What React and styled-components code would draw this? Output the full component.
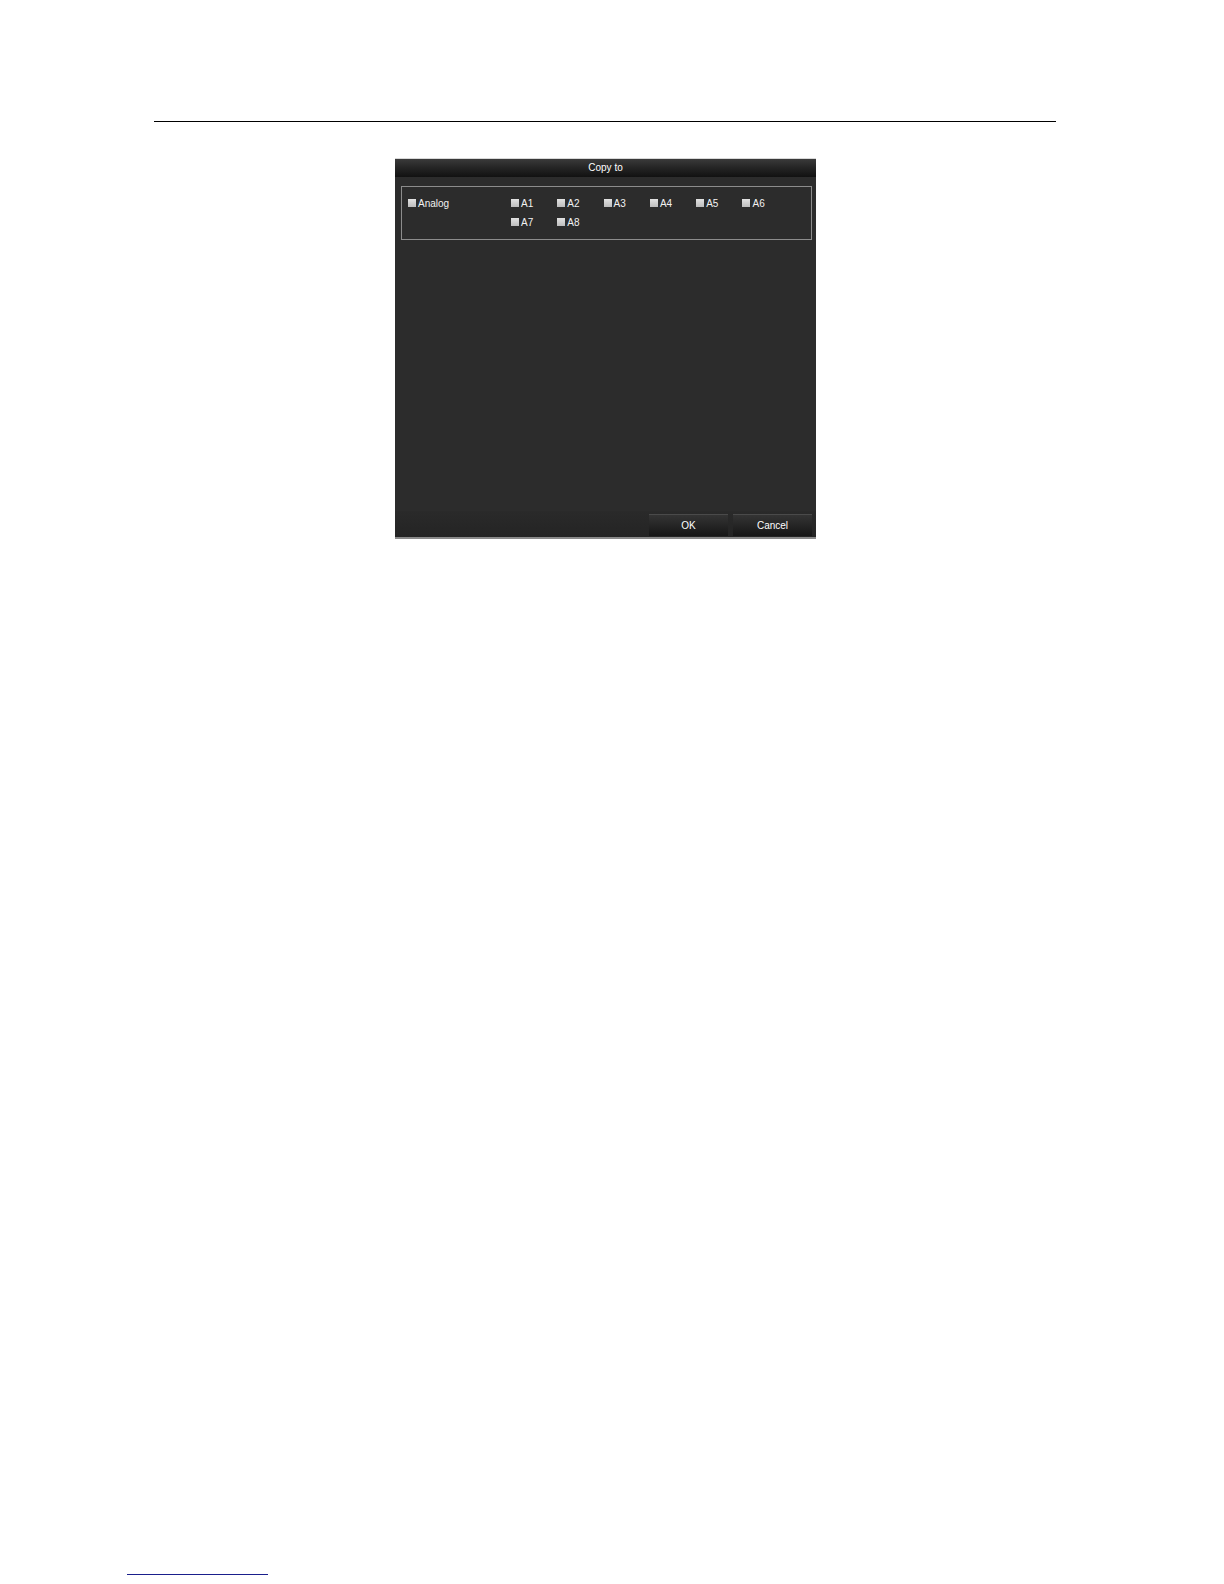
import React from 'react';
import styled, { createGlobalStyle } from 'styled-components';

const GlobalStyle = createGlobalStyle`
    html, body {
        margin: 0;
        padding: 0;
        background: #ffffff;
        overflow: hidden;
    }
`

const Page = styled.div`
    width: 1224px;
    display: flex;
    flex-direction: column;
    font-family: 'Liberation Sans', Arial, sans-serif;
`

const HeaderRule = styled.div`
    margin: 121px 0 0 154px;
    width: 902px;
    height: 1px;
    background: #000000;
`

const Dialog = styled.div`
    margin: 36px 0 0 395px;
    width: 421px;
    height: 381px;
    display: flex;
    flex-direction: column;
    background: #2c2c2c;
    border-top: 1px solid #d8d8d8;
    box-sizing: border-box;
`

const TitleBar = styled.div`
    height: 17px;
    display: flex;
    align-items: center;
    justify-content: center;
    background: linear-gradient(#3a3a3a 0%, #262626 45%, #111111 100%);
    color: #ffffff;
    font-size: 10px;
    padding-bottom: 1px;
`

const Body = styled.div`
    flex: 1;
    padding: 9px 4px 0 6px;
    background: #2c2c2c;
`

const Group = styled.div`
    height: 54px;
    box-sizing: border-box;
    border: 1px solid #8c8c8c;
    display: flex;
    padding: 11px 0 0 6px;
`

const GroupLabel = styled.div`
    width: 103px;
`

const Channels = styled.div`
    display: grid;
    grid-template-columns: repeat(6, 46.3px);
    grid-auto-rows: 19px;
    align-content: start;
`

const Check = styled.label`
    display: flex;
    align-items: center;
    height: 10px;
    color: #f2f2f2;
    font-size: 10px;
    white-space: nowrap;
`

const Box = styled.span`
    width: 8px;
    height: 8px;
    margin-right: 2px;
    background: linear-gradient(#e2e2e2, #bdbdbd);
`

const BottomBar = styled.div`
    height: 28px;
    display: flex;
    justify-content: flex-end;
    align-items: flex-start;
    gap: 5px;
    padding: 3px 4px 0 0;
    box-sizing: border-box;
    background: linear-gradient(#2a2a2a, #242424);
    border-bottom: 2px solid #8a8a8a;
`

const Button = styled.div`
    width: 79px;
    height: 22px;
    display: flex;
    align-items: center;
    justify-content: center;
    color: #ffffff;
    font-size: 10px;
    box-sizing: border-box;
    border-top: 1px solid #4a4a4a;
    background: linear-gradient(#343434 0%, #282828 40%, #161616 100%);
`

const FooterRule = styled.div`
    margin: 1035px 0 0 127px;
    width: 141px;
    height: 1px;
    background: #1a1f8c;
`

const channels = ['A1', 'A2', 'A3', 'A4', 'A5', 'A6', 'A7', 'A8'];

const App = () => {
    return (
        <Page>
            <GlobalStyle />
            <HeaderRule />
            <Dialog>
                <TitleBar>Copy to</TitleBar>
                <Body>
                    <Group>
                        <GroupLabel>
                            <Check><Box />Analog</Check>
                        </GroupLabel>
                        <Channels>
                            {channels.map(c => (
                                <Check key={c}><Box />{c}</Check>
                            ))}
                        </Channels>
                    </Group>
                </Body>
                <BottomBar>
                    <Button>OK</Button>
                    <Button>Cancel</Button>
                </BottomBar>
            </Dialog>
            <FooterRule />
        </Page>
    )
}

export default App;
